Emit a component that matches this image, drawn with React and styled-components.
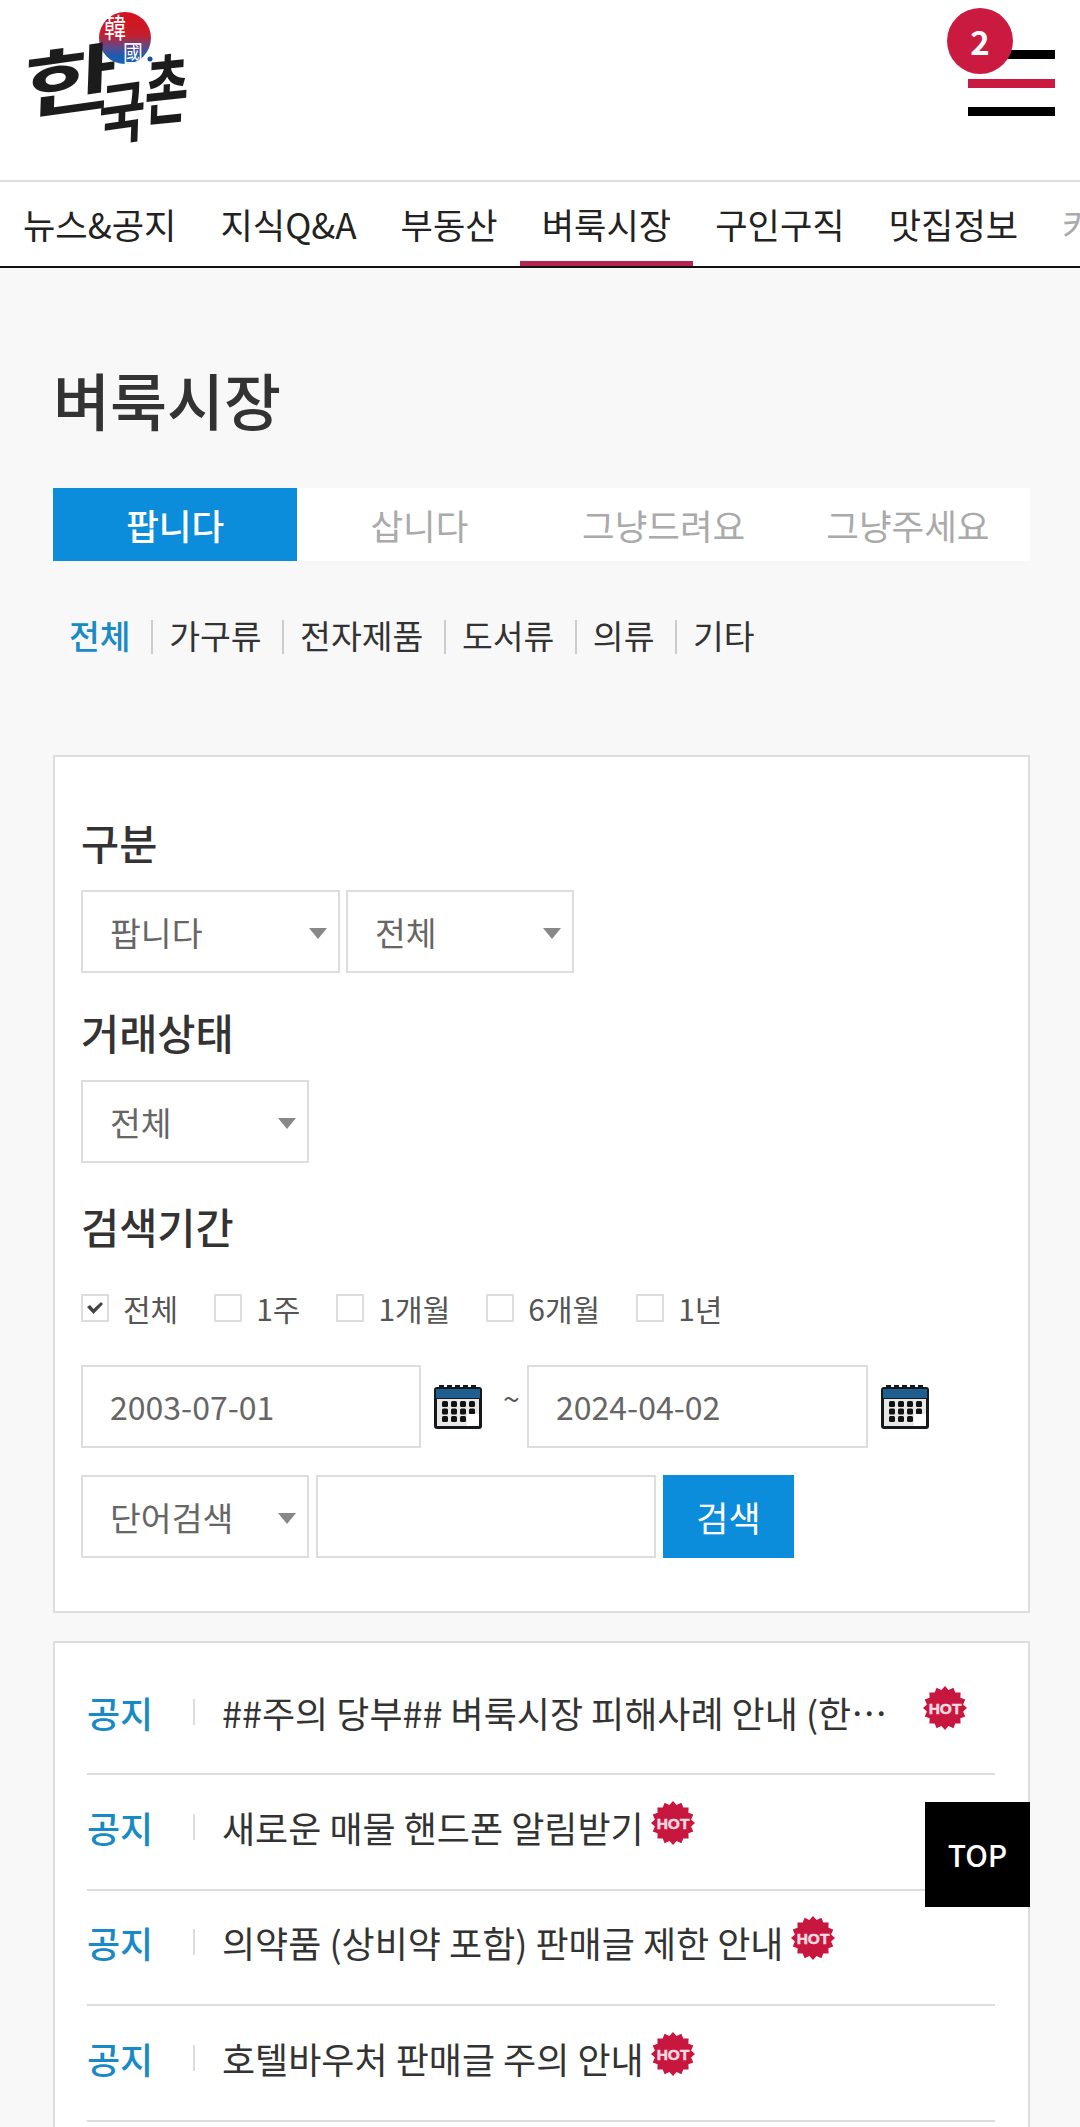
import React from 'react';
import styled, { createGlobalStyle } from 'styled-components';

const GlobalStyle = createGlobalStyle`
  html, body {
    margin: 0;
    padding: 0;
    height: 2127px;
    overflow: hidden;
    background: #f8f8f8;
  }
  * {
    box-sizing: border-box;
  }
  body {
    font-family: "Noto Sans CJK KR", "Noto Sans", sans-serif;
    color: #333;
  }
`;

const Page = styled.div`
  height: 2127px;
  overflow: hidden;
  position: relative;
`;

const Header = styled.header`
  height: 180px;
  background: #fff;
  display: flex;
  justify-content: space-between;
  position: relative;
`;

const LogoWrap = styled.a`
  display: block;
  width: 200px;
  height: 150px;
  margin-left: 20px;
`;

const MenuButton = styled.button`
  position: relative;
  width: 87px;
  height: 66px;
  margin: 50px 25px 0 0;
  padding: 0;
  border: 0;
  background: none;
  display: flex;
  flex-direction: column;
  justify-content: space-between;
`;

const MenuBar = styled.span`
  display: block;
  height: 9px;
  background: ${p => (p.$red ? '#cb1a3f' : '#000')};
`;

const Badge = styled.span`
  position: absolute;
  left: -21px;
  top: -42px;
  width: 66px;
  height: 66px;
  border-radius: 50%;
  background: #cb1a3f;
  color: #fff;
  font-family: "Noto Sans CJK KR", sans-serif;
  font-size: 33px;
  font-weight: 700;
  line-height: 66px;
  text-align: center;
`;

const Nav = styled.nav`
  position: relative;
  height: 88px;
  background: #fff;
  border-top: 2px solid #ddd;
  border-bottom: 2px solid #111;
  display: flex;
  padding-left: 1px;
  overflow: hidden;
  white-space: nowrap;
`;

const NavItem = styled.a`
  flex: none;
  height: 84px;
  padding: 0 22px;
  font-size: 35.2px;
  line-height: 84px;
  color: #222;
  border-bottom: 5px solid ${p => (p.$active ? '#b5254f' : 'transparent')};
  margin-bottom: -1px;
`;

const NavFade = styled.span`
  position: absolute;
  top: 0;
  right: 0;
  bottom: 0;
  width: 40px;
  background: rgba(255, 255, 255, 0.62);
`;

const Content = styled.main`
  padding: 0 50px 0 53px;
`;

const Title = styled.h1`
  margin: 0;
  padding-top: 95px;
  font-size: 62px;
  font-weight: 500;
  line-height: 72px;
  color: #333;
`;

const Tabs = styled.div`
  display: grid;
  grid-template-columns: repeat(4, 1fr);
  height: 73px;
  margin-top: 53px;
  background: #fff;
`;

const Tab = styled.a`
  background: ${p => (p.$active ? '#0b8ddb' : 'transparent')};
  color: ${p => (p.$active ? '#fff' : '#aaa')};
  font-size: 35.5px;
  font-weight: ${p => (p.$active ? 500 : 400)};
  line-height: 73px;
  text-align: center;
`;

const Categories = styled.ul`
  display: flex;
  align-items: center;
  list-style: none;
  margin: 56px 0 0;
  padding: 0 0 0 16px;
  height: 36px;
`;

const Category = styled.li`
  font-size: 33.5px;
  line-height: 36px;
  color: ${p => (p.$active ? '#1a8ac6' : '#333')};
  font-weight: ${p => (p.$active ? 500 : 400)};
  &:not(:first-child)::before {
    content: '';
    display: inline-block;
    width: 2px;
    height: 34px;
    background: #ccc;
    margin: 0 16px 0 20.5px;
    vertical-align: -5px;
  }
`;

const Panel = styled.section`
  background: #fff;
  border: 2px solid #ddd;
  margin-top: ${p => p.$top}px;
  padding: ${p => p.$pad};
`;

const Label = styled.h2`
  margin: ${p => p.$top || 0}px 0 ${p => p.$bottom ?? 23}px;
  font-size: 41.5px;
  font-weight: 500;
  line-height: 50px;
  color: #333;
`;

const FieldRow = styled.div`
  display: flex;
  align-items: center;
  gap: ${p => p.$gap ?? 6}px;
  margin-top: ${p => p.$top || 0}px;
`;

const SelectBox = styled.div`
  position: relative;
  width: ${p => p.$width}px;
  height: 83px;
  background: #fff;
  border: 2px solid #ddd;
  padding-left: 27px;
  font-size: 33.5px;
  line-height: 79px;
  color: #666;
  &::after {
    content: '';
    position: absolute;
    right: 11px;
    top: 36px;
    border-style: solid;
    border-width: 11px 9px 0;
    border-color: #888 transparent transparent;
  }
`;

const TextBox = styled.div`
  width: ${p => p.$width}px;
  height: 83px;
  background: #fff;
  border: 2px solid #ddd;
  padding-left: 27px;
  font-size: 32px;
  line-height: 79px;
  color: #666;
`;

const CheckRow = styled.div`
  display: flex;
  align-items: center;
  gap: 36px;
  height: 40px;
  margin-top: 37px;
  margin-bottom: 37px;
`;

const CheckLabel = styled.label`
  display: flex;
  align-items: center;
  gap: 14px;
  font-size: 30px;
  line-height: 40px;
  color: #555;
`;

const CheckBox = styled.span`
  width: 28px;
  height: 28px;
  border: 2px solid #ddd;
  background: #fff;
  display: flex;
  align-items: center;
  justify-content: center;
`;

const Tilde = styled.span`
  width: 45px;
  height: 50px;
  padding-left: 21px;
  margin-bottom: 10px;
  font-size: 30px;
  line-height: 40px;
  color: #555;
`;

const CalendarSlot = styled.span`
  display: block;
  width: 48px;
  height: 44px;
  margin-left: 13px;
`;

const SearchButton = styled.button`
  width: 131px;
  height: 83px;
  border: 0;
  padding: 0;
  background: #0b8ddb;
  color: #fff;
  font-family: inherit;
  font-size: 35px;
`;

const NoticeRow = styled.div`
  display: flex;
  align-items: center;
  height: 115.4px;
  padding-bottom: 10px;
  border-bottom: 2px solid #ddd;
`;

const NoticeTag = styled.span`
  flex: none;
  width: 106px;
  font-size: 36px;
  font-weight: 500;
  line-height: 50px;
  color: #1a8ac6;
`;

const NoticeSep = styled.span`
  flex: none;
  width: 2px;
  height: 26px;
  margin-right: 27px;
  background: #ddd;
`;

const NoticeTitle = styled.span`
  font-size: 36px;
  line-height: 50px;
  color: #333;
  white-space: nowrap;
  overflow: hidden;
  text-overflow: ellipsis;
  max-width: ${p => (p.$clip ? '672px' : 'none')};
`;

const HotWrap = styled.span`
  flex: none;
  display: block;
  width: 44px;
  height: 44px;
  margin-left: ${p => p.$left}px;
  margin-top: -8px;
`;

const TopButton = styled.a`
  position: absolute;
  left: 925px;
  top: 1802px;
  width: 105px;
  height: 105px;
  background: #000;
  color: #fff;
  font-size: 30px;
  font-weight: 500;
  line-height: 105px;
  text-align: center;
`;

const Logo = () => (
  <svg width="200" height="150" viewBox="0 0 200 150">
    <defs>
      <linearGradient id="logoBall" x1="0" y1="0" x2="0" y2="1">
        <stop offset="0" stopColor="#d8121c" />
        <stop offset="0.45" stopColor="#c41f2e" />
        <stop offset="0.68" stopColor="#5d4a8c" />
        <stop offset="0.85" stopColor="#1a5cb0" />
        <stop offset="1" stopColor="#1f63b5" />
      </linearGradient>
    </defs>
    <circle cx="105" cy="38" r="26" fill="url(#logoBall)" />
    <circle cx="130" cy="59" r="2.5" fill="#1a4f9c" />
    <text transform="translate(84 38) scale(1 1.25)" fontSize="22" fill="#fff" fontFamily="'Noto Sans CJK TC', sans-serif">韓</text>
    <text transform="translate(103 62) scale(0.9 1.1)" fontSize="22" fill="#fff" fontFamily="'Noto Sans CJK TC', sans-serif">國</text>
    <g fill="#1c1c1c" fontFamily="'Noto Sans CJK KR', sans-serif" fontWeight="700">
      <text transform="translate(3 114) rotate(-8) skewX(-10) scale(1.5 1.05)" fontSize="68">한</text>
      <text transform="translate(78 141) rotate(-8) skewX(-10) scale(0.88 1.15)" fontSize="58">국</text>
      <text transform="translate(124 120) rotate(-6) skewX(-8) scale(0.85 1.35)" fontSize="56">촌</text>
    </g>
  </svg>
);

const Calendar = () => (
  <svg width="48" height="44" viewBox="0 0 48 44">
    <rect x="0" y="2" width="48" height="42" rx="3" fill="#16191c" />
    <rect x="2" y="4" width="44" height="9" fill="#1f5f8f" />
    <rect x="3" y="14" width="42" height="27" fill="#e8e8e8" />
    {[5, 13, 21, 29, 37].map(x => (
      <rect key={x} x={x} y="0" width="5" height="4" fill="#16191c" />
    ))}
    {[8, 17, 26, 35].map(x =>
      [16, 23.5, 31].map(y =>
        x === 35 && y === 31 ? null : <rect key={`${x}-${y}`} x={x} y={y} width="6" height="6" rx="1.5" fill="#111" />
      )
    )}
    <rect x="33" y="29" width="12" height="12" fill="#fff" />
  </svg>
);

const starPoints = () => {
  const pts = [];
  for (let i = 0; i < 32; i++) {
    const r = i % 2 === 0 ? 22 : 18.5;
    const a = (i / 32) * Math.PI * 2;
    pts.push(`${(22 + r * Math.cos(a)).toFixed(1)},${(22 + r * Math.sin(a)).toFixed(1)}`);
  }
  return pts.join(' ');
};

const Hot = ({ left }) => (
  <HotWrap $left={left}>
    <svg width="44" height="44" viewBox="0 0 44 44">
      <polygon points={starPoints()} fill="#c8173e" />
      <text x="22" y="27.5" textAnchor="middle" fontSize="15.5" fontWeight="700" stroke="#f6dbe2" strokeWidth="0.5" fill="#f6dbe2" fontFamily="'Liberation Sans', sans-serif">HOT</text>
    </svg>
  </HotWrap>
);

const navItems = ['뉴스&공지', '지식Q&A', '부동산', '벼룩시장', '구인구직', '맛집정보', '커뮤니티'];
const tabs = ['팝니다', '삽니다', '그냥드려요', '그냥주세요'];
const categories = ['전체', '가구류', '전자제품', '도서류', '의류', '기타'];
const periods = ['전체', '1주', '1개월', '6개월', '1년'];
const notices = [
  { title: '##주의 당부## 벼룩시장 피해사례 안내 (한인 커뮤니티 공지)', clip: true, left: 29 },
  { title: '새로운 매물 핸드폰 알림받기', left: 7 },
  { title: '의약품 (상비약 포함) 판매글 제한 안내', left: 8 },
  { title: '호텔바우처 판매글 주의 안내', left: 7 }
];

const App = () => (
  <Page>
    <GlobalStyle />
    <Header>
      <LogoWrap><Logo /></LogoWrap>
      <MenuButton>
        <MenuBar />
        <MenuBar $red />
        <MenuBar />
        <Badge>2</Badge>
      </MenuButton>
    </Header>
    <Nav>
      {navItems.map((item, i) => (
        <NavItem key={item} $active={i === 3}>{item}</NavItem>
      ))}
      <NavFade />
    </Nav>
    <Content>
      <Title>벼룩시장</Title>
      <Tabs>
        {tabs.map((tab, i) => (
          <Tab key={tab} $active={i === 0}>{tab}</Tab>
        ))}
      </Tabs>
      <Categories>
        {categories.map((c, i) => (
          <Category key={c} $active={i === 0}>{c}</Category>
        ))}
      </Categories>
      <Panel $top={102} $pad="60px 26px 53px 26px">
        <Label>구분</Label>
        <FieldRow>
          <SelectBox $width={259}>팝니다</SelectBox>
          <SelectBox $width={228}>전체</SelectBox>
        </FieldRow>
        <Label $top={34}>거래상태</Label>
        <SelectBox $width={228}>전체</SelectBox>
        <Label $top={38} $bottom={0}>검색기간</Label>
        <CheckRow>
          {periods.map((p, i) => (
            <CheckLabel key={p}>
              <CheckBox>
                {i === 0 && (
                  <svg width="18" height="14" viewBox="0 0 18 14">
                    <path d="M1 6 L4 4 L7.5 8 L15 1 L17 3 L7.5 13 Z" fill="#444" />
                  </svg>
                )}
              </CheckBox>
              {p}
            </CheckLabel>
          ))}
        </CheckRow>
        <FieldRow $gap={0}>
          <TextBox $width={340}>2003-07-01</TextBox>
          <CalendarSlot><Calendar /></CalendarSlot>
          <Tilde>~</Tilde>
          <TextBox $width={341}>2024-04-02</TextBox>
          <CalendarSlot><Calendar /></CalendarSlot>
        </FieldRow>
        <FieldRow $top={27} $gap={7}>
          <SelectBox $width={228}>단어검색</SelectBox>
          <TextBox $width={340} />
          <SearchButton>검색</SearchButton>
        </FieldRow>
      </Panel>
      <Panel $top={28} $pad="17px 33px 60px 32px">
        {notices.map(n => (
          <NoticeRow key={n.title}>
            <NoticeTag>공지</NoticeTag>
            <NoticeSep />
            <NoticeTitle $clip={n.clip}>{n.title}</NoticeTitle>
            <Hot left={n.left} />
          </NoticeRow>
        ))}
      </Panel>
    </Content>
    <TopButton>TOP</TopButton>
  </Page>
);

export default App;
